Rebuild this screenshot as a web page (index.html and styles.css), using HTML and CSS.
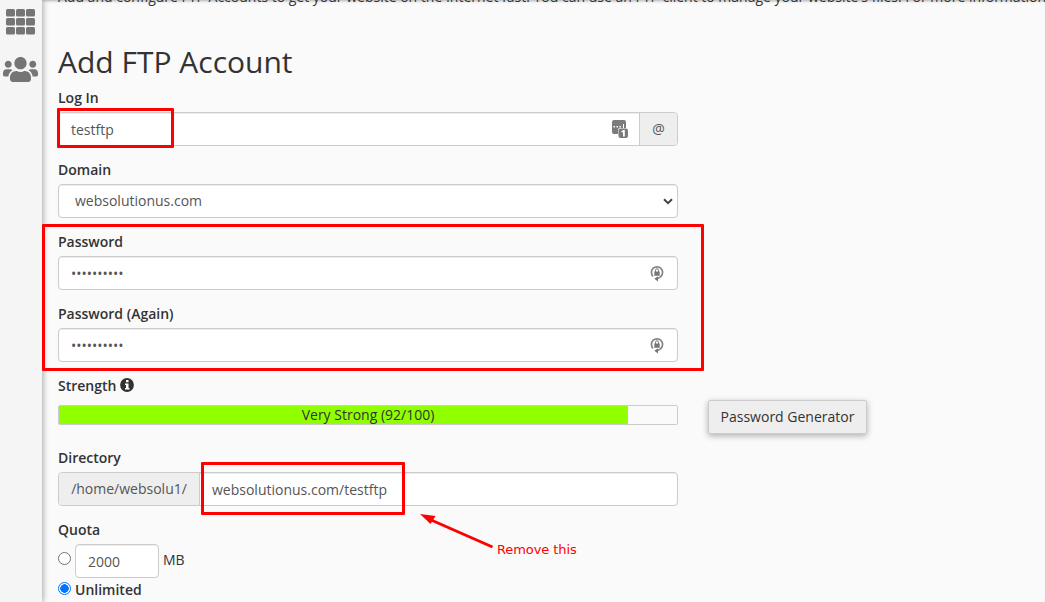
FILE: index.html
```
<!DOCTYPE html>
<html lang="en">
<head>
<meta charset="utf-8">
<title>FTP Accounts</title>
<link rel="stylesheet" href="styles.css">
</head>
<body>
<div class="app">
  <nav class="sidebar">
    <svg class="grid-icon" width="29" height="26" viewBox="0 0 29 26"><g fill="#757575"><rect x="0" y="0" width="9" height="7.500" rx="1.500"/><rect x="10" y="0" width="9" height="7.500" rx="1.500"/><rect x="20" y="0" width="9" height="7.500" rx="1.500"/><rect x="0" y="9" width="9" height="7.500" rx="1.500"/><rect x="10" y="9" width="9" height="7.500" rx="1.500"/><rect x="20" y="9" width="9" height="7.500" rx="1.500"/><rect x="0" y="18" width="9" height="7.500" rx="1.500"/><rect x="10" y="18" width="9" height="7.500" rx="1.500"/><rect x="20" y="18" width="9" height="7.500" rx="1.500"/></g></svg>
    <svg class="users-icon" width="35" height="25" viewBox="0 0 640 457"><path fill="#757575" d="M96 197c35 0 64-29 64-64s-29-64-64-64-64 29-64 64 29 64 64 64zm448 0c35 0 64-29 64-64s-29-64-64-64-64 29-64 64 29 64 64 64zm32 25h-64c-18 0-34 7-45 19 40 22 69 62 75 115h66c18 0 32-14 32-32v-38c0-35-29-64-64-64zm-256 2c62 0 112-50 112-112S382 0 320 0 208 50 208 112s50 112 112 112zm77 32h-8c-21 10-44 16-69 16s-48-6-69-16h-8c-64 0-115 52-115 115v38c0 26 21 48 48 48h288c27 0 48-22 48-48v-38c0-63-51-115-115-115zm-224-15c-11-12-27-19-45-19H64c-35 0-64 29-64 64v38c0 18 14 32 32 32h66c6-53 35-93 75-115z"/></svg>
  </nav>
  <main class="content">
    <p class="intro">Add and configure FTP Accounts to get your website on the Internet fast. You can use an FTP client to manage your website's files. For more information,</p>
    <h2 class="title">Add FTP Account</h2>
    <form class="form">
      <div class="group">
        <label class="label">Log In</label>
        <div class="control">
          <span class="field">testftp</span>
          <svg class="fill-icon" width="17" height="19" viewBox="0 0 17 19"><path fill="#7b7b7b" d="M2 0h10q2 0 2 2v6H8q-2 0-2 2v4H2q-2 0-2-2V2q0-2 2-2z"/><path fill="#fff" d="M1.500 6h1.500v1.500H1.500zM4.500 6H6v1.500H4.500zM7.500 6H9v1.500H7.500zM11 4h1v4h-1z"/><rect x="6.500" y="8.500" width="9.500" height="9.500" rx="2" fill="#7b7b7b"/><path fill="#fff" d="M11 10h1.800v6.500H11v-4.300H9.500v-1.200q1.200 0 1.500-1z"/></svg>
          <span class="addon at">@</span>
        </div>
      </div>
      <div class="group">
        <label class="label">Domain</label>
        <div class="control select"><span class="field">websolutionus.com</span>
          <svg class="chevron" width="10" height="7" viewBox="0 0 10 7"><path d="M1 1.200l4 4 4-4" fill="none" stroke="#444" stroke-width="2"/></svg>
        </div>
      </div>
      <div class="group">
        <label class="label">Password</label>
        <div class="control"><span class="field dots">••••••••••</span>
          <svg class="lock-icon" width="14" height="18" viewBox="0 0 14 18"><path d="M3 11.300A5.600 5.600 0 1 1 11 11.300Q9.300 13.300 6.500 13.800" fill="none" stroke="#858585" stroke-width="1.700"/><path fill="#777" d="M4.300 6.500h5.400V10.700H4.300zM8 11.200v5.300l-3.700-2.700z"/><path d="M5.500 7V5.300a1.500 1.500 0 0 1 3 0V7" fill="none" stroke="#777"/></svg>
        </div>
      </div>
      <div class="group">
        <label class="label">Password (Again)</label>
        <div class="control"><span class="field dots">••••••••••</span>
          <svg class="lock-icon" width="14" height="18" viewBox="0 0 14 18"><path d="M3 11.300A5.600 5.600 0 1 1 11 11.300Q9.300 13.300 6.500 13.800" fill="none" stroke="#858585" stroke-width="1.700"/><path fill="#777" d="M4.300 6.500h5.400V10.700H4.300zM8 11.200v5.300l-3.700-2.700z"/><path d="M5.500 7V5.300a1.500 1.500 0 0 1 3 0V7" fill="none" stroke="#777"/></svg>
        </div>
      </div>
      <div class="group">
        <label class="label">Strength <svg class="info" width="14" height="14" viewBox="0 0 14 14"><circle cx="7" cy="7" r="6.900" fill="#333"/><path fill="#fff" d="M6 2h2.500v2.200H6zM5 5.500h3.500V10h1v1.500H5V10h1V7H5z"/></svg></label>
        <div class="strength-row">
          <div class="meter"><div class="meter-fill" style="width:92%"></div><span class="meter-text">Very Strong (92/100)</span></div>
          <button type="button" class="button">Password Generator</button>
        </div>
      </div>
      <div class="group">
        <label class="label">Directory</label>
        <div class="control"><span class="addon home">/home/websolu1/</span><span class="field directory">websolutionus.com/testftp</span></div>
      </div>
      <div class="group">
        <label class="label">Quota</label>
        <div class="quota"><span class="radio"></span><span class="control amount"><span class="field">2000</span></span><span class="unit">MB</span></div>
        <div class="unlimited"><span class="radio checked"></span><span class="label">Unlimited</span></div>
      </div>
    </form>
  </main>
  <div class="mark mark-login"></div>
  <div class="mark mark-password"></div>
  <div class="mark mark-directory"></div>
  <svg class="arrow" width="75" height="38" viewBox="0 0 75 38"><path d="M10 5.500l62.500 27.500" stroke="#f00" stroke-width="3"/><path d="M0 0l15.500 2-5 8z" fill="#f00"/></svg>
  <span class="note">Remove this</span>
</div>
</body>
</html>
```
FILE: styles.css
```
* { box-sizing: border-box; }
body { margin: 0; background: #fafafa; color: #333; font: 14px/20px "Open Sans", sans-serif; overflow: hidden; }
.app { position: relative; display: flex; width: 1045px; height: 602px; overflow: hidden; box-shadow: inset 0 3px 3px -2px rgba(0,0,0,.3); }
.sidebar { flex: none; width: 42px; background: #f5f5f5; box-shadow: 1px 0 6px rgba(0,0,0,.35); display: flex; flex-direction: column; align-items: center; padding: 9px 1px 0 0; gap: 22px; }
.sidebar svg { flex: none; }
.content { flex: none; width: 1003px; padding-left: 16px; }
.intro { margin: -13px 0 0; height: 20px; white-space: nowrap; }
.title { margin: 38px 0 10px; font-size: 30px; line-height: 33px; font-weight: 400; }
.form { width: 620px; }
.group { height: 72px; }
.label { display: block; height: 24px; line-height: 20px; font-weight: 600; white-space: nowrap; }
.control { position: relative; display: flex; align-items: stretch; height: 34px; border: 1px solid #ccc; border-radius: 4px; background: #fff; color: #555; box-shadow: inset 0 1px 1px rgba(0,0,0,.075); }
.field { flex: 1; padding: 7px 12px 5px; line-height: 20px; }
.select .field { padding: 6px 16px; }
.fill-icon { margin: 7px 10px 0 0; }
.lock-icon { margin: 8px 13px 0 0; }
.chevron { margin: 13px 4px 0 0; }
.addon { background: #eee; text-align: center; line-height: 32px; }
.at { width: 38px; border-left: 1px solid #ccc; border-radius: 0 3px 3px 0; }
.home { width: 141px; border-right: 1px solid #ccc; border-radius: 3px 0 0 3px; }
.directory { padding-left: 12px; }
.info { vertical-align: -1px; }
.strength-row { display: flex; align-items: flex-start; gap: 30px; width: 820px; }
.meter { position: relative; width: 620px; height: 20px; margin-top: 5px; border: 1px solid #ccc; border-radius: 2px; }
.meter-fill { height: 18px; background: #90ff00; }
.meter-text { position: absolute; inset: -1px 0 0; text-align: center; line-height: 20px; }
.button { width: 159px; height: 34px; flex: none; margin-top: 0; padding: 0; border: 1px solid #ccc; border-radius: 2px; background: #eee; box-shadow: 0 2px 6px rgba(0,0,0,.3); font: inherit; color: #333; }
.quota, .unlimited { display: flex; }
.radio { width: 13px; height: 13px; border: 1px solid #767676; border-radius: 50%; background: #fff; margin: 8px 4px 0 0; }
.amount { width: 84px; }
.unit { margin: 6px 0 0 4px; }
.unlimited { margin-top: 2px; }
.checked { margin-top: 2px; border-color: #0075ff; background: radial-gradient(circle, #0075ff 0 4px, #fff 4.500px); }
.mark { position: absolute; border: 3px solid #f00; border-radius: 1px; }
.mark-login { left: 57px; top: 108px; width: 117px; height: 40px; }
.mark-password { left: 42px; top: 224px; width: 662px; height: 147px; }
.mark-directory { left: 201px; top: 462px; width: 204px; height: 53px; }
.arrow { position: absolute; left: 420px; top: 514px; }
.note { position: absolute; left: 497px; top: 541px; color: #f00; font: 13px/18px "DejaVu Sans", sans-serif; letter-spacing: -.08px; white-space: nowrap; }
```
